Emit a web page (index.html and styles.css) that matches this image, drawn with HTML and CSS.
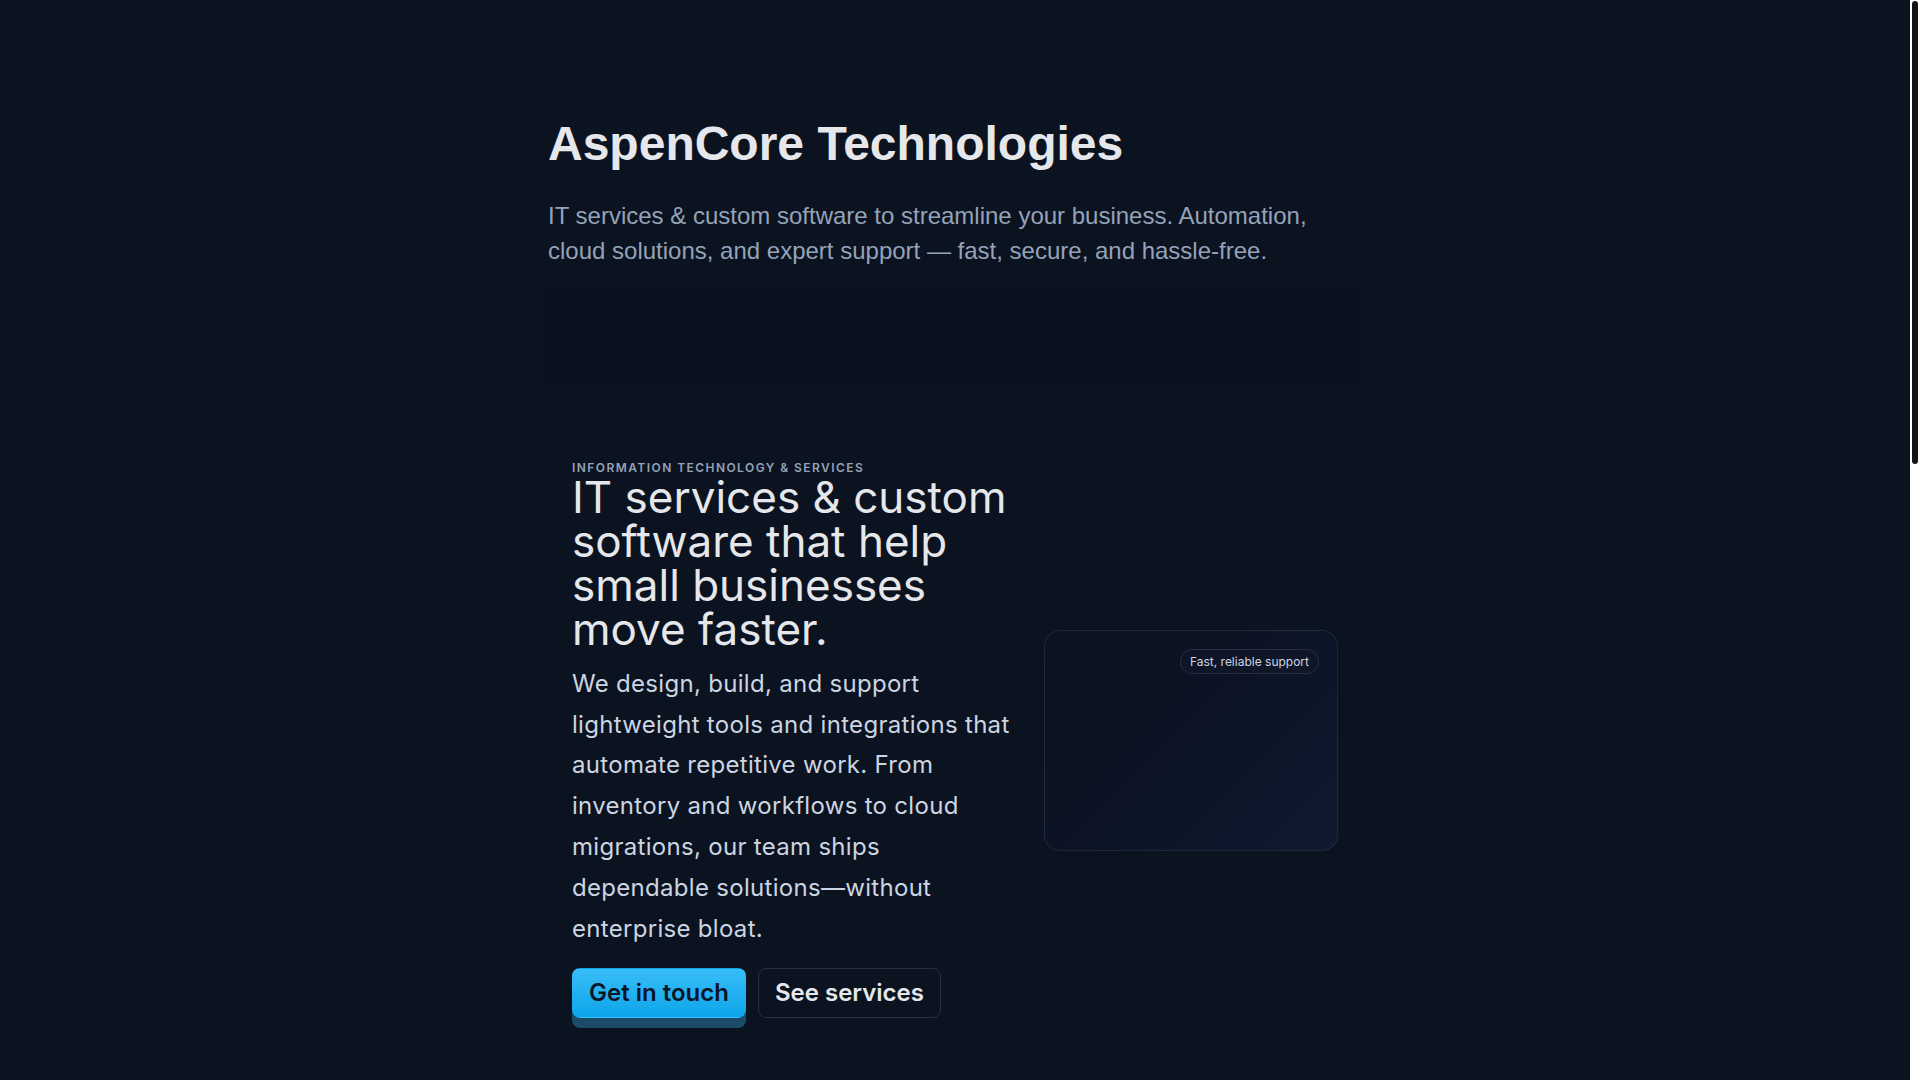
FILE: index.html
```html
<!DOCTYPE html>
<html lang="en">
<head>
<meta charset="utf-8">
<title>AspenCore Technologies</title>
<link rel="stylesheet" href="styles.css">
</head>
<body>
  <div class="page">
    <header class="site-header">
      <h1 class="brand">AspenCore Technologies</h1>
      <p class="tagline">IT services &amp; custom software to streamline your business. Automation, cloud solutions, and expert support — fast, secure, and hassle-free.</p>
      <div class="header-panel"></div>
    </header>

    <section class="hero">
      <div class="hero-copy">
        <p class="eyebrow">Information Technology &amp; Services</p>
        <h2 class="hero-title">IT services &amp; custom software that help small businesses move faster.</h2>
        <p class="hero-text">We design, build, and support lightweight tools and integrations that automate repetitive work. From inventory and workflows to cloud migrations, our team ships dependable solutions—without enterprise bloat.</p>
        <div class="hero-actions">
          <a class="btn btn-primary" href="#contact">Get in touch</a>
          <a class="btn btn-secondary" href="#services">See services</a>
        </div>
      </div>
      <div class="hero-visual">
        <span class="badge">Fast, reliable support</span>
      </div>
    </section>
  </div>

  <div class="scrollbar" aria-hidden="true"><div class="scrollbar-thumb"></div></div>
</body>
</html>
```

FILE: styles.css
```css
html, body {
  margin: 0;
  padding: 0;
}

body {
  padding-right: 10px;
  background: #0b1220;
  color: #e5e7eb;
  font-family: Inter, "Liberation Sans", Arial, sans-serif;
}

.page {
  width: 814px;
  margin: 0 auto;
  padding-bottom: 240px;
}

.site-header {
  padding-top: 115px;
  font-family: "Liberation Sans", Arial, sans-serif;
}

.brand {
  margin: 0;
  font-size: 48px;
  line-height: 1.2;
  font-weight: 700;
  color: #e5e7eb;
}

.tagline {
  margin: 25px 0 0;
  font-size: 24px;
  line-height: 1.475;
  color: #94a3b8;
}

.header-panel {
  margin-top: 18px;
  height: 95px;
  background: rgba(3, 7, 18, 0.1);
  box-shadow: 0 0 3px 1px rgba(15, 23, 42, 0.3);
}

.hero {
  margin-top: 57px;
  padding: 24px;
  display: grid;
  grid-template-columns: 1.5fr 1fr;
  gap: 32px;
  align-items: center;
}

.hero-copy {
  display: flex;
  flex-direction: column;
}

.eyebrow {
  margin: 0 0 1px;
  font-size: 12px;
  line-height: 12px;
  font-weight: 600;
  letter-spacing: 0.12em;
  text-transform: uppercase;
  color: #94a3b8;
}

.hero-title {
  margin: 0;
  font-size: 44px;
  line-height: 1;
  font-weight: 400;
  color: #e5e7eb;
}

.hero-text {
  margin: 12.5px 0 0;
  font-size: 24px;
  line-height: 1.7;
  letter-spacing: 0.3px;
  color: #cbd5e1;
}

.hero-actions {
  margin-top: 19px;
  display: flex;
  gap: 12px;
}

.btn {
  display: inline-flex;
  align-items: center;
  padding: 11px 16px;
  font-size: 24px;
  line-height: 26px;
  font-weight: 600;
  border-radius: 8px;
  border: 1px solid transparent;
  text-decoration: none;
}

.btn-primary {
  background: linear-gradient(180deg, #38bdf8 0%, #0ea5e9 100%);
  color: #0b1526;
  box-shadow: 0 10px 0 #1b4b69;
}

.btn-secondary {
  background: transparent;
  border-color: rgba(148, 163, 184, 0.2);
  color: #e5e7eb;
}

.hero-visual {
  position: relative;
  aspect-ratio: 4 / 3;
  border: 1px solid rgba(148, 163, 184, 0.14);
  border-radius: 16px;
  background: linear-gradient(135deg, #0b1220 0%, #0b1324 45%, #0f1a30 100%);
}

.badge {
  position: absolute;
  top: 18px;
  right: 18px;
  padding: 4px 9px;
  font-size: 12px;
  line-height: normal;
  color: #cbd5e1;
  background: rgba(15, 23, 42, 0.7);
  border: 1px solid rgba(148, 163, 184, 0.18);
  border-radius: 999px;
}

/* browser scrollbar as seen in the reference */
.scrollbar {
  position: fixed;
  top: 0;
  right: 0;
  width: 10px;
  height: 100vh;
  background: #ffffff;
}

.scrollbar-thumb {
  margin: 1px 2px 0;
  height: 463px;
  background: #141414;
  border-radius: 3px;
}
```
